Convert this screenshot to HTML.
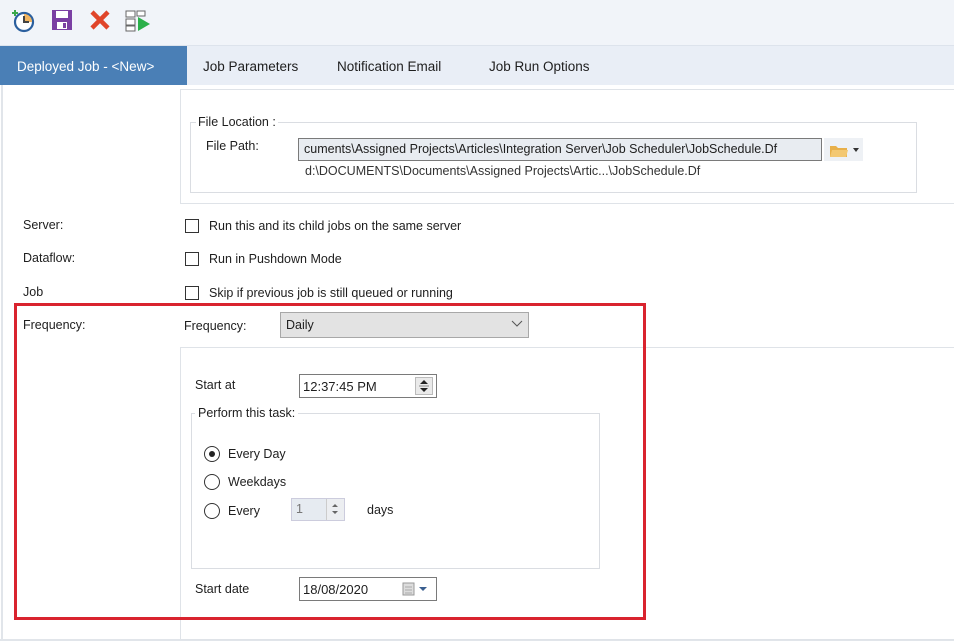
<!DOCTYPE html>
<html><head><meta charset="utf-8"><style>
*{box-sizing:border-box;margin:0;padding:0}
body{width:954px;height:644px;overflow:hidden;background:#fff;font-family:"Liberation Sans",sans-serif;font-size:12.5px;color:#1e1e1e;position:relative}
.a{position:absolute;white-space:nowrap}
.cb{position:absolute;width:14px;height:14px;border:1px solid #333;background:#fff}
.rd{position:absolute;width:16px;height:16px;border:1px solid #333;border-radius:50%;background:#fff}
</style></head><body>
<div class="a" style="left:0;top:0;width:954px;height:45px;background:#f1f4f9"></div>
<svg class="a" style="left:12px;top:8px" width="26" height="26" viewBox="0 0 26 26">
<circle cx="12" cy="14" r="9" fill="#fff" stroke="#2b5f9e" stroke-width="2.2"/>
<path d="M12 14 L12 6 A8 8 0 0 1 20 14Z" fill="#f2b560"/>
<path d="M12 8 V14 H17" stroke="#444" stroke-width="2" fill="none"/>
<path d="M3 2v6M0 5h6" stroke="#3aa84a" stroke-width="2"/></svg>
<svg class="a" style="left:51px;top:9px" width="22" height="22" viewBox="0 0 22 22">
<rect x="1" y="1" width="20" height="20" fill="#7a3fa3"/><rect x="5" y="2" width="12" height="7" fill="#fff"/><rect x="6" y="13" width="10" height="7" fill="#fff"/><rect x="12" y="14" width="3" height="5" fill="#7a3fa3"/></svg>
<svg class="a" style="left:89px;top:10px" width="22" height="20" viewBox="0 0 22 20"><path d="M3 2L19 18M19 2L3 18" stroke="#e0452a" stroke-width="4.5"/></svg>
<svg class="a" style="left:125px;top:10px" width="26" height="22" viewBox="0 0 26 22">
<rect x="1" y="1" width="9" height="6" fill="#fff" stroke="#666"/><rect x="1" y="9" width="9" height="6" fill="#fff" stroke="#666"/><rect x="1" y="16" width="9" height="5" fill="#fff" stroke="#666"/><rect x="12" y="1" width="8" height="5" fill="#fff" stroke="#666"/>
<path d="M13 7L25 14L13 21Z" fill="#2bb04a"/></svg>
<div class="a" style="left:0;top:45px;width:954px;height:40px;background:#e9eef6;border-top:1px solid #dde3ec"></div>
<div class="a" style="left:0;top:46px;width:187px;height:39px;background:#4a7fb6"></div>
<div class="a" style="left:17px;top:59px;color:#fff;font-size:13.5px">Deployed Job - &lt;New&gt;</div>
<div class="a" style="left:203px;top:59px;font-size:13.5px">Job Parameters</div>
<div class="a" style="left:337px;top:59px;font-size:13.5px">Notification Email</div>
<div class="a" style="left:489px;top:59px;font-size:13.5px">Job Run Options</div>
<div class="a" style="left:1px;top:85px;width:2px;height:556px;background:#e1e5ea"></div>
<div class="a" style="left:0;top:639px;width:954px;height:2px;background:#e1e5ea"></div>
<div class="a" style="left:180px;top:89px;width:780px;height:115px;border:1px solid #dfe3e8"></div>
<div class="a" style="left:190px;top:122px;width:727px;height:71px;border:1px solid #dadde2"></div>
<div class="a" style="left:196px;top:115px;background:#fff;padding:0 2px">File Location :</div>
<div class="a" style="left:206px;top:139px">File Path:</div>
<div class="a" style="left:298px;top:138px;width:524px;height:23px;border:1px solid #7a7a7a;background:#e8ecf1;padding:3px 0 0 5px;overflow:hidden">cuments\Assigned Projects\Articles\Integration Server\Job Scheduler\JobSchedule.Df</div>
<div class="a" style="left:824px;top:138px;width:39px;height:23px;background:#eef1f5"></div>
<svg class="a" style="left:829px;top:142px" width="34" height="16" viewBox="0 0 34 16"><path d="M1 4h6l2 2h9v9H1z" fill="#e8b04a"/><path d="M3 8h16l-2 7H1z" fill="#f3c872"/><path d="M24 6h6l-3 4z" fill="#333"/></svg>
<div class="a" style="left:305px;top:164px;color:#333">d:\DOCUMENTS\Documents\Assigned Projects\Artic...\JobSchedule.Df</div>
<div class="a" style="left:23px;top:218px">Server:</div>
<div class="a" style="left:23px;top:251px">Dataflow:</div>
<div class="a" style="left:23px;top:285px">Job</div>
<div class="cb" style="left:185px;top:219px"></div><div class="a" style="left:209px;top:219px">Run this and its child jobs on the same server</div>
<div class="cb" style="left:185px;top:252px"></div><div class="a" style="left:209px;top:252px">Run in Pushdown Mode</div>
<div class="cb" style="left:185px;top:286px"></div><div class="a" style="left:209px;top:286px">Skip if previous job is still queued or running</div>
<div class="a" style="left:23px;top:318px">Frequency:</div>
<div class="a" style="left:184px;top:319px">Frequency:</div>
<div class="a" style="left:280px;top:312px;width:249px;height:26px;border:1px solid #a8a8a8;background:#e3e3e3;padding:5px 0 0 5px">Daily</div>
<svg class="a" style="left:511px;top:320px" width="12" height="8"><path d="M1 1l5 5 5-5" stroke="#555" fill="none"/></svg>
<div class="a" style="left:180px;top:347px;width:780px;height:293px;border:1px solid #dfe3e8"></div>
<div class="a" style="left:195px;top:378px">Start at</div>
<div class="a" style="left:299px;top:374px;width:138px;height:24px;border:1px solid #7a7a7a;background:#fff;padding:4px 0 0 3px;font-size:13px">12:37:45 PM</div>
<div class="a" style="left:415px;top:377px;width:18px;height:18px;border:1px solid #bbb;background:#eaeaea"></div>
<svg class="a" style="left:418px;top:379px" width="12" height="14"><path d="M2 5l4-4 4 4zM2 9l4 4 4-4z" fill="#222"/><path d="M1 7h10" stroke="#888"/></svg>
<div class="a" style="left:191px;top:413px;width:409px;height:156px;border:1px solid #dadde2"></div>
<div class="a" style="left:195px;top:406px;background:#fff;padding:0 3px">Perform this task:</div>
<div class="rd" style="left:204px;top:446px"></div><div class="a" style="left:209px;top:451px;width:6px;height:6px;border-radius:50%;background:#222"></div>
<div class="a" style="left:228px;top:447px">Every Day</div>
<div class="rd" style="left:204px;top:474px"></div><div class="a" style="left:228px;top:475px">Weekdays</div>
<div class="rd" style="left:204px;top:503px"></div><div class="a" style="left:228px;top:504px">Every</div>
<div class="a" style="left:291px;top:498px;width:54px;height:23px;border:1px solid #ccd;background:#e6ebf1;padding:3px 0 0 4px;color:#777">1</div>
<div class="a" style="left:326px;top:499px;width:18px;height:21px;background:#eceef1;border-left:1px solid #ccc"></div>
<svg class="a" style="left:329px;top:502px" width="12" height="14"><path d="M3 5l3-3 3 3zM3 9l3 3 3-3z" fill="#666"/></svg>
<div class="a" style="left:367px;top:503px">days</div>
<div class="a" style="left:195px;top:582px">Start date</div>
<div class="a" style="left:299px;top:577px;width:138px;height:24px;border:1px solid #7a7a7a;background:#fff;padding:4px 0 0 3px;font-size:13px">18/08/2020</div>
<svg class="a" style="left:402px;top:581px" width="30" height="16"><rect x="1" y="2" width="11" height="12" fill="#ddd" stroke="#999"/><path d="M3 6h7M3 9h7M3 12h7" stroke="#aaa"/><path d="M17 6h8l-4 4z" fill="#3a5f8f"/></svg>
<div class="a" style="left:14px;top:303px;width:632px;height:317px;border:3px solid #d9232e"></div>
</body></html>
